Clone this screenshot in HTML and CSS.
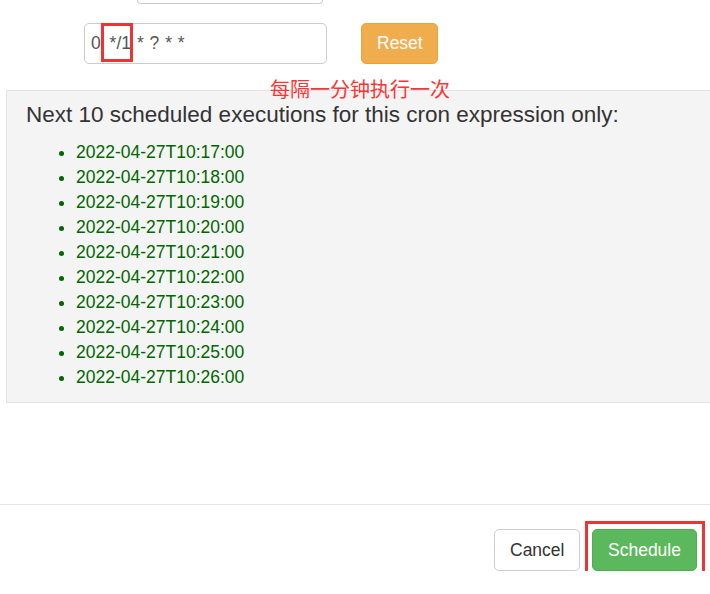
FILE: index.html
```html
<!DOCTYPE html>
<html>
<head>
<title>Schedule job</title>
<link rel="stylesheet" href="styles.css">
</head>
<body>

<div class="topfield"></div>

<div class="cronrow">
<div class="croninput">0 <span class="mark">*/1</span> * ? * *</div>
<button class="btn btn-reset">Reset</button>
<div class="markbox"></div>
<div class="note">每隔一分钟执行一次</div>
</div>

<div id="nextruns">
<h4>Next 10 scheduled executions for this cron expression only:</h4>
<ul>
<li>2022-04-27T10:17:00</li>
<li>2022-04-27T10:18:00</li>
<li>2022-04-27T10:19:00</li>
<li>2022-04-27T10:20:00</li>
<li>2022-04-27T10:21:00</li>
<li>2022-04-27T10:22:00</li>
<li>2022-04-27T10:23:00</li>
<li>2022-04-27T10:24:00</li>
<li>2022-04-27T10:25:00</li>
<li>2022-04-27T10:26:00</li>
</ul>
</div>

<div class="footer">
<button class="btn btn-cancel">Cancel</button>
<div class="schedwrap">
<button class="btn btn-schedule">Schedule</button>
<div class="schedbox"></div>
</div>
</div>

</body>
</html>
```

FILE: styles.css
```css
body{
margin:0;
font-family:"Liberation Sans", Arial, sans-serif;
color:#333333;
background:#ffffff;
}

.topfield{
margin-left:137px;
width:184px;
height:3px;
border:1px solid #cccccc;
border-top:0;
border-radius:0 0 5px 5px;
}

.cronrow{
position:relative;
display:flex;
margin-top:19px;
padding-left:84px;
height:41px;
}

.croninput{
box-sizing:border-box;
width:243px;
height:41px;
padding:0 6px;
border:1px solid #cccccc;
border-radius:5px;
font-size:17.5px;
line-height:39px;
color:#555555;
word-spacing:1px;
}

.mark{
margin-left:3px;
}

.markbox{
position:absolute;
left:101px;
top:0;
width:26px;
height:33px;
border:3px solid #ee3333;
}

.note{
position:absolute;
left:270px;
top:53px;
font-family:"Noto Sans CJK SC", sans-serif;
font-size:20px;
line-height:26px;
color:#ff3333;
z-index:2;
}

.btn{
box-sizing:border-box;
height:41px;
padding:0 15px;
border:1px solid transparent;
border-radius:5px;
font-family:"Liberation Sans", Arial, sans-serif;
font-size:17.5px;
}

.btn-reset{
margin-left:34px;
width:77px;
background:#f0ad4e;
border-color:#eea236;
color:#ffffff;
}

#nextruns{
box-sizing:border-box;
margin:26px 0 0 6px;
height:313px;
padding:11px 19px 0;
background:#f4f4f4;
border:1px solid #e3e3e3;
border-right:0;
}

#nextruns h4{
margin:0;
font-size:22.5px;
font-weight:normal;
line-height:25px;
}

#nextruns ul{
margin:13px 0 0;
padding-left:50px;
}

#nextruns li{
font-size:17.5px;
line-height:25px;
color:#006600;
}

.footer{
display:flex;
align-items:flex-start;
justify-content:flex-end;
gap:12px;
margin-top:101px;
padding:24px 13px 0 0;
border-top:1px solid #e5e5e5;
}

.footer .btn{
height:42px;
}

.btn-cancel{
width:86px;
background:#ffffff;
border-color:#cccccc;
color:#333333;
}

.schedwrap{
position:relative;
width:105px;
height:42px;
}

.btn-schedule{
display:block;
width:105px;
background:#5cb85c;
border-color:#4cae4c;
color:#ffffff;
}

.schedbox{
position:absolute;
left:-7px;
top:-8px;
width:114px;
height:51px;
border:3px solid #ee3333;
}
```
